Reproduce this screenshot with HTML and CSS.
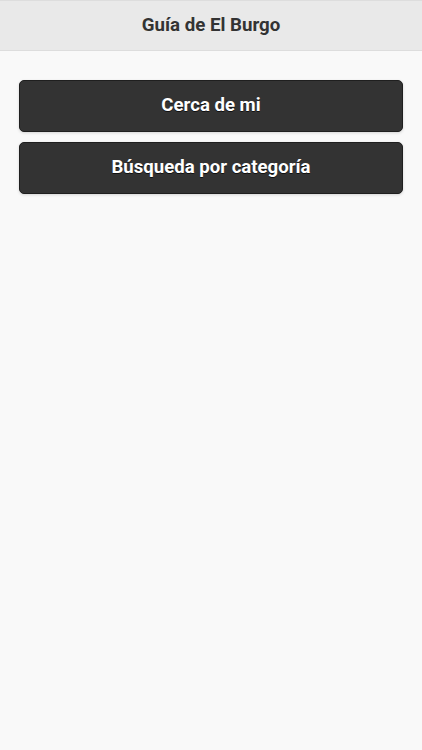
FILE: index.html
```html
<!DOCTYPE html>
<html lang="es">
  <head>
    <meta charset="UTF-8" />
    <title>Guía de El Burgo</title>
    <link rel="stylesheet" href="styles.css">
  </head>
  <body>
    <div class="header">
      <h1>Guía de El Burgo</h1>
    </div>

    <div class="content">
      <a href="#" class="btn">Cerca de mi</a>
      <a href="#" class="btn">Búsqueda por categoría</a>
    </div>
  </body>
</html>
```

FILE: styles.css
```css
html, body {
  margin: 0;
  padding: 0;
}
body {
  font-family: Roboto, "Liberation Sans", sans-serif;
  background: #f9f9f9;
  min-height: 750px;
}
.header {
  background: #e9e9e9;
  border-top: 1px solid #dddddd;
  border-bottom: 1px solid #dddddd;
  height: 49px;
  display: flex;
  align-items: center;
  justify-content: center;
}
.header h1 {
  margin: 0 0 2px;
  font-size: 18.7px;
  font-weight: bold;
  color: #333;
}
.content {
  padding: 29px 19px;
  display: flex;
  flex-direction: column;
  gap: 10px;
}
.btn {
  display: flex;
  align-items: center;
  justify-content: center;
  box-sizing: border-box;
  height: 52px;
  padding-bottom: 3px;
  background: #333;
  border: 1px solid #1f1f1f;
  border-radius: 5px;
  color: #fff;
  font-size: 18.6px;
  font-weight: bold;
  text-decoration: none;
  text-shadow: 0 1px 0 #111;
  box-shadow: 0 1px 3px rgba(0, 0, 0, 0.15);
}
```
